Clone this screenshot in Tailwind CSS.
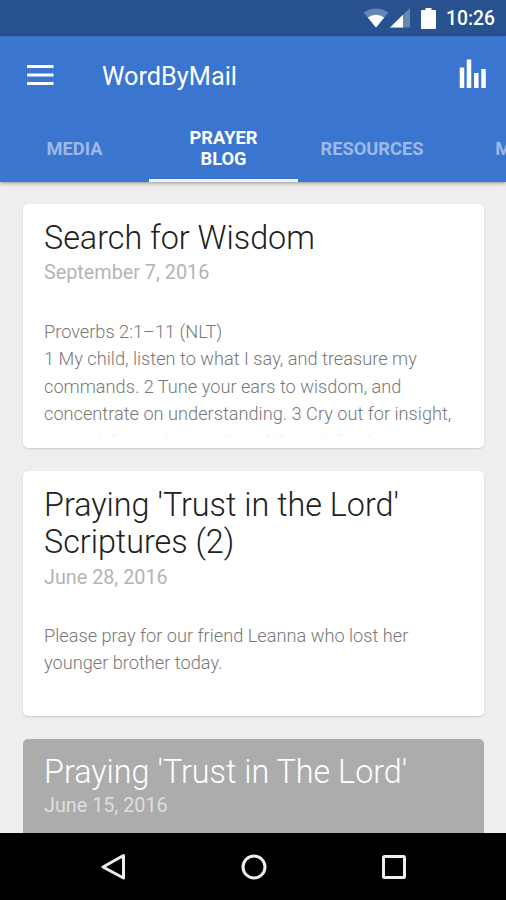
<!DOCTYPE html>
<html lang="en">
<head>
    <meta charset="UTF-8">
    <meta name="viewport" content="width=device-width, initial-scale=1.0">
    <title>WordByMail</title>
    <script src="https://cdn.jsdelivr.net/npm/@tailwindcss/browser@4"></script>
</head>
<body class="bg-[#eeeeee] font-['Roboto',sans-serif]">

<div class="flex flex-col w-[506px] h-[900px] overflow-hidden">

  <!-- Status bar -->
  <div class="flex items-center justify-end h-[36px] shrink-0 bg-[#28528f] pr-[11px] text-white">
    <svg class="w-[26px] h-[20px]" viewBox="0 0 26 20">
      <path d="M13 19.500L.5 4.500Q13-3.500 25.500 4.500Z" fill="#fff" fill-opacity=".3"/>
      <path d="M13 19.500L4.800 9.500Q13 4 21.200 9.500Z" fill="#fff"/>
    </svg>
    <svg class="w-[20px] h-[20px] ml-[1px]" viewBox="0 0 20 20">
      <path d="M0 19.500L20 0V19.500Z" fill="#fff" fill-opacity=".3"/>
      <path d="M0 19.500L13 6.800V19.500Z" fill="#fff"/>
    </svg>
    <svg class="w-[15px] h-[21px] ml-[11px]" viewBox="0 0 15 21">
      <path d="M4.500 0h6v2H14q1 0 1 1v17q0 1-1 1H1q-1 0-1-1V3q0-1 1-1h3.500z" fill="#fff"/>
    </svg>
    <span class="ml-[10px] mt-[2px] w-[49px] text-[19.300px] leading-none font-medium whitespace-nowrap">10:26</span>
  </div>

  <!-- App bar -->
  <header class="relative h-[146px] shrink-0 bg-[#3a75cf] text-white shadow-[0_1px_4px_rgba(0,0,0,0.4)]">
    <div class="flex items-center h-[79px] pl-[27px] pr-[20px]">
      <svg class="w-[27px] h-[20px] -mt-[2px]" viewBox="0 0 27 20">
        <path d="M0 1.500h26.500M0 10h26.500M0 18.500h26.500" stroke="#fff" stroke-width="3"/>
      </svg>
      <h1 class="ml-[48px] mt-[2px] text-[25.300px] leading-none">WordByMail</h1>
      <svg class="ml-auto w-[27px] h-[30px] -mt-[3px]" viewBox="0 0 27 30">
        <path d="M3 8.500v20.500M10 .5v28.500M17.300 14v15M24.500 10v19" stroke="#fff" stroke-width="4.500"/>
      </svg>
    </div>
    <nav class="flex h-[67px] overflow-hidden text-[18.300px] leading-[21px] font-bold text-center text-[#9dbae7]">
      <a class="flex items-center justify-center w-[149px] shrink-0">MEDIA</a>
      <a class="flex items-center justify-center w-[149px] shrink-0 px-8 border-b-3 border-[#eef3fb] pt-[1px] text-white">PRAYER BLOG</a>
      <a class="flex items-center justify-center w-[148px] shrink-0">RESOURCES</a>
      <a class="flex items-center justify-center w-[149px] shrink-0">MORE</a>
    </nav>
  </header>

  <!-- Posts -->
  <main class="flex flex-col gap-[23px] flex-1 min-h-0 overflow-hidden pt-[22px] pl-[23px] pr-[22px]">
    <article class="h-[244px] shrink-0 rounded-[5px] bg-white px-[21px] pt-[16px] shadow-[0_1px_2px_rgba(0,0,0,0.15)]">
      <h2 class="text-[32.300px] leading-[37px] font-light text-[#212121]">Search for Wisdom</h2>
      <p class="mt-[4px] text-[19.800px] leading-[24px] text-[#b4b4b4]">September 7, 2016</p>
      <div class="relative mt-[33px] h-[120px] overflow-hidden text-[18.200px] leading-[27.400px] font-light text-[#787878] whitespace-nowrap">
        Proverbs 2:1–11 (NLT)<br>
        1 My child, listen to what I say, and treasure my<br>
        commands. 2 Tune your ears to wisdom, and<br>
        concentrate on understanding. 3 Cry out for insight,<br>
        and ask for understanding. 4 Search for them as you
        <div class="absolute inset-x-0 bottom-0 h-[14px] bg-linear-to-b from-white/40 to-white"></div>
      </div>
    </article>

    <article class="h-[245px] shrink-0 rounded-[5px] bg-white px-[21px] pt-[16px] shadow-[0_1px_2px_rgba(0,0,0,0.15)]">
      <h2 class="text-[32.300px] leading-[37px] font-light text-[#212121] whitespace-nowrap">Praying 'Trust in the Lord'<br>Scriptures (2)</h2>
      <p class="mt-[5px] text-[19.800px] leading-[24px] text-[#b4b4b4]">June 28, 2016</p>
      <p class="mt-[32px] text-[18.200px] leading-[27.400px] font-light text-[#787878] whitespace-nowrap">Please pray for our friend Leanna who lost her<br>younger brother today.</p>
    </article>

    <article class="h-[245px] shrink-0 rounded-[5px] bg-[#acacac] px-[21px] pt-[15px]">
      <h2 class="text-[32.300px] leading-[37px] font-light text-white whitespace-nowrap">Praying 'Trust in The Lord'</h2>
      <p class="mt-[3px] text-[19.800px] leading-[24px] text-[#dedede]">June 15, 2016</p>
    </article>
  </main>

  <!-- Navigation bar -->
  <footer class="flex items-center h-[67px] shrink-0 bg-black pl-[101px]">
    <svg class="w-[25px] h-[28px]" viewBox="0 0 25 28" fill="none" stroke="#eee" stroke-width="3" stroke-linejoin="round">
      <path d="M22.500 2.500V25L2 14Z"/>
    </svg>
    <svg class="w-[26px] h-[26px] ml-[115px]" viewBox="0 0 26 26" fill="none" stroke="#eee" stroke-width="3">
      <circle cx="13" cy="13" r="11"/>
    </svg>
    <svg class="w-[24px] h-[24px] ml-[115px]" viewBox="0 0 24 24" fill="none" stroke="#eee" stroke-width="3">
      <rect x="1.500" y="1.500" width="21" height="21" rx="1"/>
    </svg>
  </footer>

</div>

</body>
</html>
